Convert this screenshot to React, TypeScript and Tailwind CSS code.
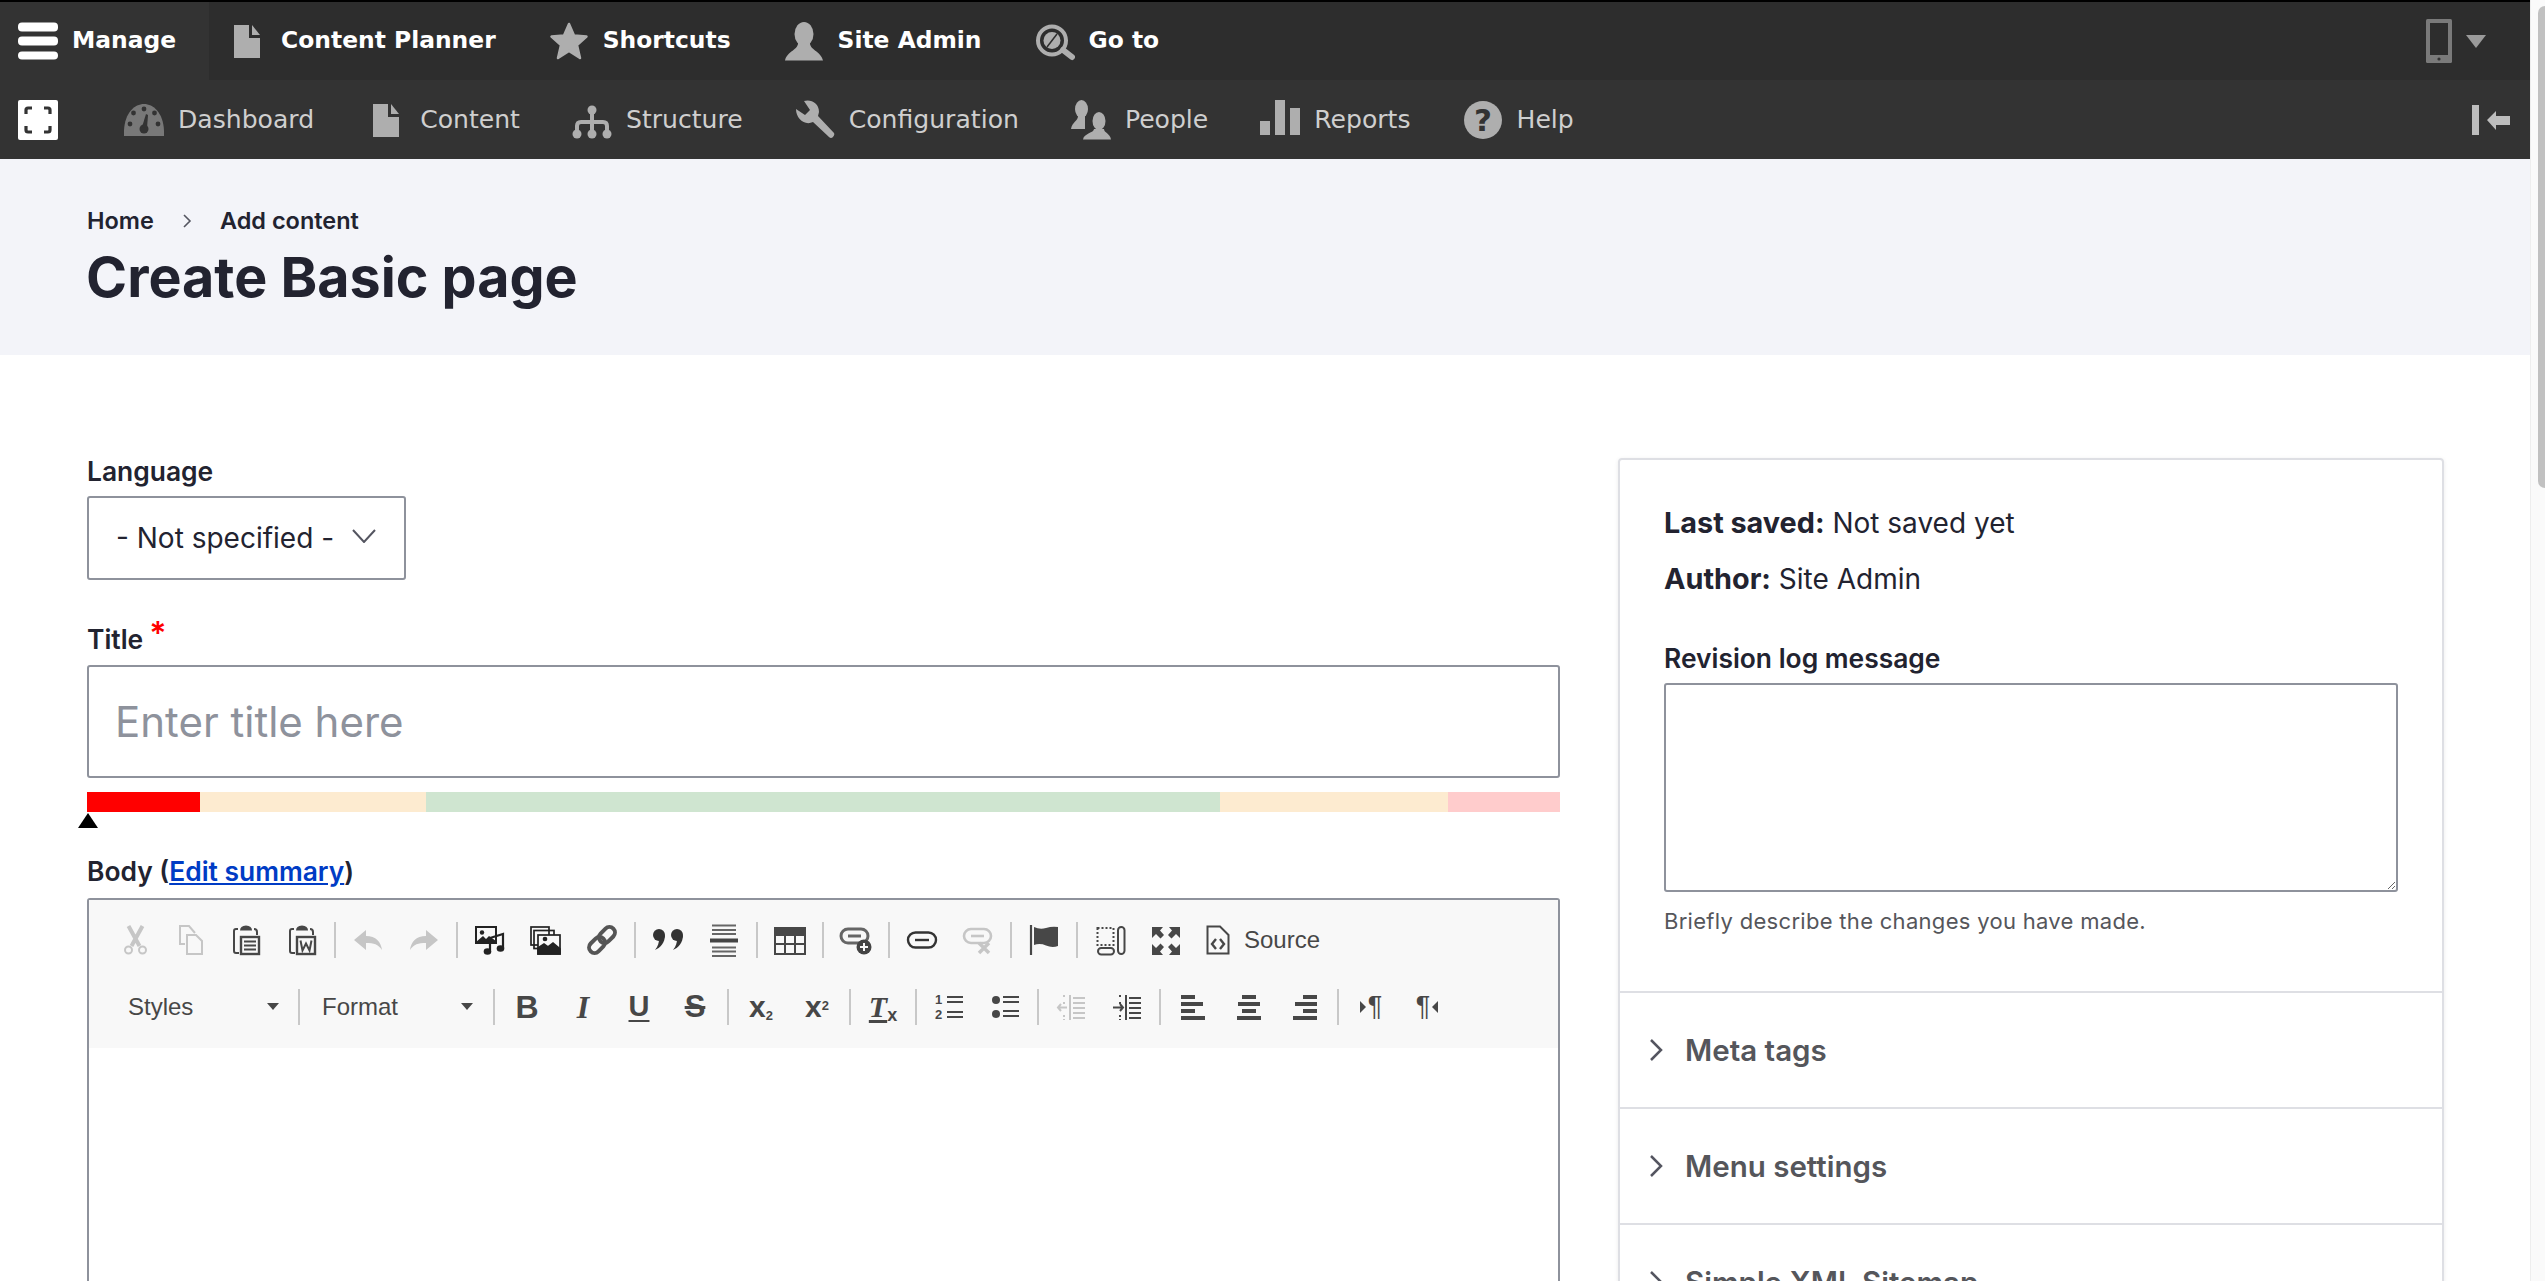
import React from "react";

const G = "#aeaeae";
const D = "#474747";
const L = "#c6c6c6";

const Nav = ({ x }: { x: React.ReactNode }) => (
  <svg width="40" height="40" viewBox="0 0 40 40" className="shrink-0">{x}</svg>
);

const docIcon = (<g fill={G}><path d="M7 4h15v13h11v20H7z" /><path d="M25 4l8 10h-8z" /></g>);
const starIcon = (<polygon fill={G} stroke={G} strokeWidth="2.5" strokeLinejoin="round" points="20,3 25,14.5 37.5,15.5 28,24 31,37 20,30 9,37 12,24 2.5,15.5 15,14.5" />);
const personIcon = (<g fill={G}><ellipse cx="20" cy="13" rx="9.5" ry="12" /><path d="M14 21C15 29 3 30 1 39.5H39C37 30 25 29 26 21z" /></g>);
const gotoIcon = (<g><circle cx="17" cy="19.5" r="14" fill="none" stroke={G} strokeWidth="4" /><circle cx="17" cy="19.5" r="8.5" fill={G} /><path d="M12 26L22 13" stroke="#2d2d2d" strokeWidth="1.5" /><path d="M28 29L37 36" stroke={G} strokeWidth="6" strokeLinecap="round" /></g>);
const dashIcon = (<g><path fill="#787878" d="M0 36C-1 14 10 4 20 4C30 4 41 14 40 36Z" /><g fill="#333"><circle cx="20" cy="9" r="2.4" /><circle cx="9.5" cy="13" r="2.4" /><circle cx="30.5" cy="13" r="2.4" /><circle cx="6" cy="24" r="2.4" /><circle cx="34" cy="24" r="2.4" /><circle cx="20" cy="29" r="4.5" /><path d="M18 27L22 14L24 15L23 28z" /></g></g>);
const structIcon = (<g fill={G} stroke={G}><circle cx="20" cy="10" r="4.5" strokeWidth="0" /><path d="M20 10V34M5 34V26Q5 22 9 22H31Q35 22 35 26V34" fill="none" strokeWidth="4" /><circle cx="5" cy="34" r="4.5" strokeWidth="0" /><circle cx="20" cy="34" r="4.5" strokeWidth="0" /><circle cx="35" cy="34" r="4.5" strokeWidth="0" /></g>);
const wrenchIcon = (<path fill={G} d="M1 9L10 15L15 10L9 1C16-1 24 3 24 12L23 16L39 33Q40 35 38 37Q36 39 34 37L18 22C10 26 1 19 1 9Z" />);
const peopleIcon = (<g fill={G}><ellipse cx="10.5" cy="9" rx="6.5" ry="9" /><path d="M7 16C7 21 1 22 0 29H14V16z" /><ellipse cx="28" cy="21" rx="7.5" ry="10" stroke="#333" strokeWidth="2" /><path d="M23 29C23 33 13 33 12 39.5H40C39 33 33 33 33 29z" /></g>);
const reportsIcon = (<g fill={G}><rect x="0" y="21" width="10" height="14" /><rect x="15" y="0" width="10" height="35" /><rect x="30" y="8" width="10" height="27" /></g>);
const helpIcon = (<g><circle cx="20" cy="20" r="19" fill={G} /><text x="20" y="31" textAnchor="middle" fontSize="31" fontWeight="700" fontFamily="'DejaVu Sans', sans-serif" fill="#333">?</text></g>);

const Top = ({ icon, label, active }: { icon: React.ReactNode; label: string; active?: boolean }) => (
  <div className={`flex h-full items-center gap-[14px] pl-[18px] ${active ? "bg-[#333333] pr-[33px]" : "pr-[35px]"}`}>
    <Nav x={icon} />
    <span className="text-[23.4px] font-bold text-white">{label}</span>
  </div>
);
const Tray = ({ icon, label }: { icon: React.ReactNode; label: string }) => (
  <div className="flex h-full items-center gap-[14px] pl-[18px] pr-[34px]">
    <Nav x={icon} />
    <span className="text-[25.1px] text-[#cfcfcf]">{label}</span>
  </div>
);

const Sep = () => <div className="mx-[4px] h-[36px] w-[2px] shrink-0 bg-[#c8c8c8]" />;
const Btn = ({ children }: { children: React.ReactNode }) => (
  <div className="flex h-[36px] w-[56px] shrink-0 items-center justify-center">{children}</div>
);
const Ico = ({ children }: { children: React.ReactNode }) => (
  <Btn><svg width="32" height="32" viewBox="0 0 32 32" className="overflow-visible">{children}</svg></Btn>
);

const paste = (word: boolean) => (
  <g fill="none" stroke={D} strokeWidth="2">
    <path d="M8 5H6Q4 5 4 7V27Q4 29 6 29H9" />
    <path d="M10 6.5Q10 2 16 1.5Q22 2 22 6.5z" fill={D} stroke="none" />
    <path d="M24 5Q27 5 27 8V11" />
    <rect x="11" y="13" width="18" height="17" strokeWidth="2.4" />
    {word ? <path d="M14.5 16.5L16.5 26.5L20 19.5L23.5 26.5L25.5 16.5" /> : <path d="M14 17.5H26M14 21.5H26M14 25.5H26" />}
  </g>
);

const T = ({ children, cls }: { children: React.ReactNode; cls: string }) => (
  <Btn><span className={cls}>{children}</span></Btn>
);
const indentIcon = (c: string, out: boolean) => (
  <g fill="none" stroke={c} strokeWidth="2">
    <path d="M15 4V29" />
    <path d="M18 7H30M18 12H30M18 17H30M18 22H30M18 27H30" />
    <path d="M9 4V8M9 11V13M9 24V29" strokeDasharray="2 2" />
    {out ? <path d="M12 16.5H3M6 13L3 16.5L6 20" /> : <path d="M2 16.5H12M9 13L12 16.5L9 20" />}
  </g>
);

const Sidebar = ({ label }: { label: string }) => (
  <div className="flex h-[116px] items-center gap-[21px] border-t-2 border-[#dedfe4] pl-[28px]">
    <svg width="16" height="24" viewBox="0 0 16 24"><path d="M3 2L13 12L3 22" fill="none" stroke="#545560" strokeWidth="2.5" /></svg>
    <span className="text-[29.5px] font-semibold leading-[32px] text-[#55565b]">{label}</span>
  </div>
);

export default function App() {
  return (
    <div className="flex h-screen w-full overflow-hidden bg-white text-[#222330]" style={{ fontFamily: "Inter, 'Liberation Sans', sans-serif" }}>
      <div className="flex h-full w-[2530px] shrink-0 flex-col overflow-hidden">
        <div className="shrink-0" style={{ fontFamily: "'DejaVu Sans', sans-serif" }}>
          <div className="flex h-[80px] items-center justify-between border-t-2 border-black bg-[#2d2d2d]">
            <div className="flex h-full items-center">
              <Top active label="Manage" icon={<g fill="#fff"><rect x="0" y="1.5" width="40" height="9" rx="4" /><rect x="0" y="15.5" width="40" height="9" rx="4" /><rect x="0" y="30.5" width="40" height="8" rx="4" /></g>} />
              <Top label="Content Planner" icon={docIcon} />
              <Top label="Shortcuts" icon={starIcon} />
              <Top label="Site Admin" icon={personIcon} />
              <Top label="Go to" icon={gotoIcon} />
            </div>
            <div className="flex items-center gap-[14px] pr-[44px]">
              <svg width="26" height="44" viewBox="0 0 26 44"><rect x="0" y="0" width="26" height="44" rx="1.5" fill="#7a7a7a" /><rect x="4" y="4" width="18" height="32" fill="#2d2d2d" /><circle cx="13" cy="40" r="1.6" fill="#333" /></svg>
              <svg width="20" height="13" viewBox="0 0 20 13"><path d="M0 0H20L10 13z" fill="#9a9a9a" /></svg>
            </div>
          </div>
          <div className="flex h-[79px] items-center justify-between bg-[#333333]">
            <div className="flex h-full items-center">
              <div className="w-[106px] pl-[18px]">
                <svg width="40" height="40" viewBox="0 0 40 40" className="block">
                  <rect width="40" height="40" rx="2" fill="#fff" />
                  <path d="M8 14V10Q8 8 10 8H14M26 8H30Q32 8 32 10V14M32 26V30Q32 32 30 32H26M14 32H10Q8 32 8 30V26" fill="none" stroke="#333" strokeWidth="3.2" />
                </svg>
              </div>
              <Tray label="Dashboard" icon={dashIcon} />
              <Tray label="Content" icon={docIcon} />
              <Tray label="Structure" icon={structIcon} />
              <Tray label="Configuration" icon={wrenchIcon} />
              <Tray label="People" icon={peopleIcon} />
              <Tray label="Reports" icon={reportsIcon} />
              <Tray label="Help" icon={helpIcon} />
            </div>
            <div className="pr-[20px]">
              <svg width="38" height="30" viewBox="0 0 38 30" className="block"><rect width="7" height="30" fill="#bdbdbd" /><path d="M15 15L24 6V11H38V20H24V25z" fill="#bdbdbd" /></svg>
            </div>
          </div>
        </div>

        <div className="flex h-[196px] shrink-0 flex-col bg-[#f3f4f9] pl-[87px] pt-[47px]">
          <div className="flex h-[30px] items-center text-[23.5px] font-semibold leading-[30px]">
            <span>Home</span>
            <svg width="10" height="14" viewBox="0 0 10 14" className="mx-[28px]"><path d="M2 1L8 7L2 13" fill="none" stroke="#545560" strokeWidth="1.6" /></svg>
            <span>Add content</span>
          </div>
          <h1 className="ml-[-1px] mt-[9px] text-[55.6px] font-bold leading-[64px]">Create Basic page</h1>
        </div>

        <div className="flex shrink-0 items-start gap-[58px] pl-[87px] pt-[101px]">
          <div className="w-[1473px] shrink-0">
            <div className="h-[30px] text-[26.4px] font-semibold leading-[30px]">Language</div>
            <div className="mt-[10px] flex h-[84px] w-[319px] items-center justify-between rounded-[3px] border-2 border-[#8e929c] pl-[27px] pr-[28px]">
              <span className="text-[28px]">- Not specified -</span>
              <svg width="24" height="14" viewBox="0 0 24 14" className="mb-[4px]"><path d="M1 1L12 13L23 1" fill="none" stroke="#545560" strokeWidth="2" /></svg>
            </div>

            <div className="mt-[44px] flex h-[30px] text-[26.4px] font-semibold leading-[30px]">
              <span>Title</span>
              <span className="ml-[6px] text-[32px] leading-[20px] text-[#ff0000]">*</span>
            </div>
            <input
              placeholder="Enter title here"
              className="mt-[11px] block h-[113px] w-full rounded-[3px] border-2 border-[#8e929c] px-[26px] text-[42px] outline-none placeholder:text-[#8e929c]"
            />

            <div className="mt-[14px] flex h-[20px]">
              <div className="w-[113px] bg-[#ff0000]" />
              <div className="w-[226px] bg-[#fdebd0]" />
              <div className="w-[794px] bg-[#cfe5d0]" />
              <div className="w-[228px] bg-[#fdebd0]" />
              <div className="w-[112px] bg-[#ffcccc]" />
            </div>
            <svg width="20" height="15" viewBox="0 0 20 15" className="ml-[-9px] mt-[1px] block"><path d="M10 0L20 15H0z" fill="#000" /></svg>

            <div className="mt-[28px] h-[30px] text-[26.4px] font-semibold leading-[30px]">
              Body (<span className="text-[#003cc5] underline">Edit summary</span>)
            </div>
            <div className="mt-[12px] h-[600px] rounded-t-[3px] border-2 border-[#8e929c]">
              <div className="bg-[#f8f8f8] pb-[8px] pl-[17px] pt-[6px]" style={{ fontFamily: "'Liberation Sans', sans-serif" }}>
                <div className="flex h-[67px] items-center">
                  <Ico>
                    <g fill="none" stroke={L} transform="translate(1.5 0)">
                      <path d="M9 2L20 22M23 2L12 22" strokeWidth="4" />
                      <circle cx="9" cy="26" r="3.5" strokeWidth="2" />
                      <circle cx="23" cy="26" r="3.5" strokeWidth="2" />
                    </g>
                  </Ico>
                  <Ico>
                    <g fill="none" stroke={L} strokeWidth="2">
                      <path d="M11 20H6V2H15L21 9" />
                      <path d="M13 11H22L28 17V30H13z" />
                    </g>
                  </Ico>
                  <Ico>{paste(false)}</Ico>
                  <Ico>{paste(true)}</Ico>
                  <Sep />
                  <Ico><path fill={L} d="M2 16L14 6V12C24 12 29 18 30 26C26 20 22 19 14 19V26Z" /></Ico>
                  <Ico><path fill={L} d="M30 16L18 6V12C8 12 3 18 2 26C6 20 10 19 18 19V26Z" /></Ico>
                  <Sep />
                  <Ico>
                    <g fill="#222">
                      <rect x="2" y="3" width="20" height="16" fill="none" stroke="#222" strokeWidth="2" />
                      <circle cx="8" cy="8.5" r="2.2" />
                      <path d="M2 18L9 12L12 15L15 12L22 17V19H2z" />
                      <path d="M16 26V14L29 10V24" fill="none" stroke="#222" strokeWidth="2.2" />
                      <ellipse cx="13.5" cy="27.5" rx="3.8" ry="3.2" />
                      <ellipse cx="26.5" cy="24.5" rx="3.8" ry="3.2" />
                    </g>
                  </Ico>
                  <Ico>
                    <g fill="none" stroke="#222" strokeWidth="1.7">
                      <rect x="1" y="3" width="18" height="18" />
                      <rect x="4" y="6.5" width="20" height="18" />
                      <rect x="8" y="11" width="22" height="19" fill="#f8f8f8" />
                      <path d="M8 30V24L14 20L18 23L23 19L30 25V30z" fill="#222" />
                      <circle cx="15" cy="15" r="1.5" fill="#222" />
                    </g>
                  </Ico>
                  <Ico>
                    <g transform="rotate(-45 16 16)" fill="none" stroke="#555" strokeWidth="4">
                      <rect x="0" y="10.5" width="18" height="11" rx="5.5" />
                      <rect x="14" y="10.5" width="18" height="11" rx="5.5" />
                    </g>
                  </Ico>
                  <Sep />
                  <Ico>
                    <g fill="#333">
                      <circle cx="7" cy="11" r="6" />
                      <path d="M13 11C13 19 8 24 3 26C6 22 7 19 7 15z" />
                      <circle cx="25" cy="11" r="6" />
                      <path d="M31 11C31 19 26 24 21 26C24 22 25 19 25 15z" />
                    </g>
                  </Ico>
                  <Ico>
                    <g fill="none" stroke="#666" strokeWidth="2">
                      <path d="M4 1.5H28M4 6H28M4 10H28M4 23.5H28M4 27.5H28M4 32H28" />
                      <path d="M2 16.5H30" stroke="#444" strokeWidth="4" />
                    </g>
                  </Ico>
                  <Sep />
                  <Ico>
                    <g fill="none" stroke={D} strokeWidth="2">
                      <rect x="1" y="4" width="30" height="26" />
                      <rect x="1" y="4" width="30" height="7" fill={D} />
                      <path d="M11 11V30M21 11V30M1 20H31" />
                    </g>
                  </Ico>
                  <Sep />
                  <Ico>
                    <g fill="none" stroke="#666" strokeWidth="3">
                      <rect x="1" y="5" width="27" height="14" rx="7" />
                      <path d="M8 12H21" />
                    </g>
                    <circle cx="24" cy="23" r="7.5" fill="#444" />
                    <path d="M24 19V27M20 23H28" stroke="#f8f8f8" strokeWidth="2" />
                  </Ico>
                  <Sep />
                  <Ico>
                    <g fill="none" stroke="#333" strokeWidth="2.4">
                      <rect x="2" y="8.5" width="28" height="15" rx="7.5" />
                      <path d="M9 16H23" />
                    </g>
                  </Ico>
                  <Ico>
                    <g fill="none" stroke={L} strokeWidth="2.6">
                      <rect x="2" y="5" width="27" height="14" rx="7" />
                      <path d="M9 12H22" />
                    </g>
                    <path d="M17 19L27 29M27 19L17 29" stroke={L} strokeWidth="3.5" />
                  </Ico>
                  <Sep />
                  <Ico>
                    <path d="M3 1V31" stroke={D} strokeWidth="2.2" />
                    <path fill={D} d="M6 3Q12 6 18 4T30 3V22Q24 24 18 21.5T6 21z" />
                  </Ico>
                  <Sep />
                  <Ico>
                    <g fill="none" stroke={D} strokeWidth="2">
                      <rect x="3.5" y="4" width="16" height="17" strokeDasharray="2 2" />
                      <rect x="24" y="3" width="6.5" height="27" rx="3.2" />
                      <rect x="4" y="24" width="16" height="6.5" rx="3.2" />
                    </g>
                  </Ico>
                  <Ico>
                    <g fill={D}>
                      <path d="M2 3H13L10 6.5L14 11L10.5 14.5L6 10L2 14z" />
                      <path d="M30 3H19L22 6.5L18 11L21.5 14.5L26 10L30 14z" />
                      <path d="M2 31H13L10 27.5L14 23L10.5 19.5L6 24L2 20z" />
                      <path d="M30 31H19L22 27.5L18 23L21.5 19.5L26 24L30 20z" />
                    </g>
                  </Ico>
                  <div className="ml-[12px] flex items-center gap-[14px]">
                    <svg width="24" height="30" viewBox="0 0 24 30">
                      <path d="M1.5 1.5H14L22.5 10V28.5H1.5z" fill="none" stroke={D} strokeWidth="2" />
                      <path d="M10 14L6 19L10 24M14 14L18 19L14 24" fill="none" stroke={D} strokeWidth="2.4" />
                    </svg>
                    <span className="text-[24px] text-[#474747]">Source</span>
                  </div>
                </div>

                <div className="flex h-[67px] items-center">
                  <div className="flex w-[188px] items-center justify-between pl-[22px] pr-[15px]">
                    <span className="text-[24px] text-[#474747]">Styles</span>
                    <svg width="12" height="7" viewBox="0 0 12 7"><path d="M0 0H12L6 7z" fill="#474747" /></svg>
                  </div>
                  <div className="mx-[4px] h-[36px] w-[2px] bg-[#c8c8c8]" />
                  <div className="flex w-[185px] items-center justify-between pl-[18px] pr-[16px]">
                    <span className="text-[24px] text-[#474747]">Format</span>
                    <svg width="12" height="7" viewBox="0 0 12 7"><path d="M0 0H12L6 7z" fill="#474747" /></svg>
                  </div>
                  <Sep />
                  <T cls="text-[32px] font-bold leading-none text-[#474747]">B</T>
                  <T cls="text-[32px] font-bold italic leading-none text-[#474747]"><span style={{ fontFamily: "'Liberation Serif', serif" }}>I</span></T>
                  <T cls="text-[29px] font-bold leading-none text-[#474747] underline underline-offset-[4px]">U</T>
                  <T cls="text-[31px] font-bold leading-none text-[#474747] line-through">S</T>
                  <Sep />
                  <T cls="text-[30px] font-bold leading-none text-[#474747]">x<sub className="text-[13px]">2</sub></T>
                  <T cls="text-[30px] font-bold leading-none text-[#474747]">x<sup className="text-[13px]">2</sup></T>
                  <Sep />
                  <T cls="text-[30px] font-bold italic leading-none text-[#474747]"><span className="underline underline-offset-[3px]" style={{ fontFamily: "'Liberation Serif', serif" }}>T</span><sub className="text-[18px] not-italic">x</sub></T>
                  <Sep />
                  <Btn>
                    <div className="flex items-center gap-[3px]">
                      <div className="flex flex-col text-[13px] font-bold leading-[15px] text-[#474747]"><span>1</span><span>2</span></div>
                      <svg width="18" height="28" viewBox="0 0 18 28"><path d="M2 4H18M2 9H18M2 19H18M2 24H18" stroke={D} strokeWidth="2" /></svg>
                    </div>
                  </Btn>
                  <Ico>
                    <g fill={D}><circle cx="7" cy="9" r="4" /><circle cx="7" cy="23" r="4" /></g>
                    <path d="M14 6H30M14 11H30M14 20H30M14 25H30" stroke={D} strokeWidth="2" />
                  </Ico>
                  <Sep />
                  <Ico>{indentIcon(L, true)}</Ico>
                  <Ico>{indentIcon(D, false)}</Ico>
                  <Sep />
                  <Ico>
                    <g fill={D}><rect x="4" y="4" width="14" height="4" /><rect x="4" y="11" width="22" height="4" /><rect x="4" y="18" width="14" height="4" /><rect x="4" y="25" width="24" height="4" /></g>
                  </Ico>
                  <Ico>
                    <g fill={D}><rect x="9" y="4" width="14" height="4" /><rect x="5" y="11" width="22" height="4" /><rect x="9" y="18" width="14" height="4" /><rect x="4" y="25" width="24" height="4" /></g>
                  </Ico>
                  <Ico>
                    <g fill={D}><rect x="14" y="4" width="14" height="4" /><rect x="6" y="11" width="22" height="4" /><rect x="14" y="18" width="14" height="4" /><rect x="4" y="25" width="24" height="4" /></g>
                  </Ico>
                  <Sep />
                  <Btn>
                    <div className="flex items-center gap-[2px]">
                      <svg width="6" height="12" viewBox="0 0 6 12"><path d="M0 0L6 6L0 12z" fill={D} /></svg>
                      <span className="text-[27px] leading-none text-[#474747]">¶</span>
                    </div>
                  </Btn>
                  <Btn>
                    <div className="flex items-center gap-[2px]">
                      <span className="text-[27px] leading-none text-[#474747]">¶</span>
                      <svg width="6" height="12" viewBox="0 0 6 12"><path d="M6 0L0 6L6 12z" fill={D} /></svg>
                    </div>
                  </Btn>
                </div>
              </div>
            </div>
          </div>

          <div className="mt-[2px] w-[826px] shrink-0 rounded-t-[4px] border-2 border-[#dedfe4] shadow-[0_1px_4px_rgba(0,0,0,0.08)]">
            <div className="h-[531px] px-[44px] pt-[46px]">
              <p className="text-[28px] leading-[34px]"><b className="text-[28.8px] font-bold">Last saved:</b> Not saved yet</p>
              <p className="mt-[22px] text-[28px] leading-[34px]"><b className="text-[28.8px] font-bold">Author:</b> Site Admin</p>
              <div className="mt-[47px] h-[30px] text-[26.4px] font-semibold leading-[30px]">Revision log message</div>
              <textarea className="mt-[10px] block h-[209px] w-full rounded-[3px] border-2 border-[#8e929c] outline-none" />
              <p className="mt-[14px] text-[22px] leading-[30px] tracking-[0.3px] text-[#55565b]">Briefly describe the changes you have made.</p>
            </div>
            <Sidebar label="Meta tags" />
            <Sidebar label="Menu settings" />
            <Sidebar label="Simple XML Sitemap" />
          </div>
        </div>
      </div>
      <div className="flex h-full w-[15px] shrink-0 items-start justify-end border-l border-[#eeeeee] bg-[#fafafa] pt-[6px]">
        <div className="h-[482px] w-[7px] rounded-l-[7px] bg-[#c1c1c1]" />
      </div>
    </div>
  );
}
